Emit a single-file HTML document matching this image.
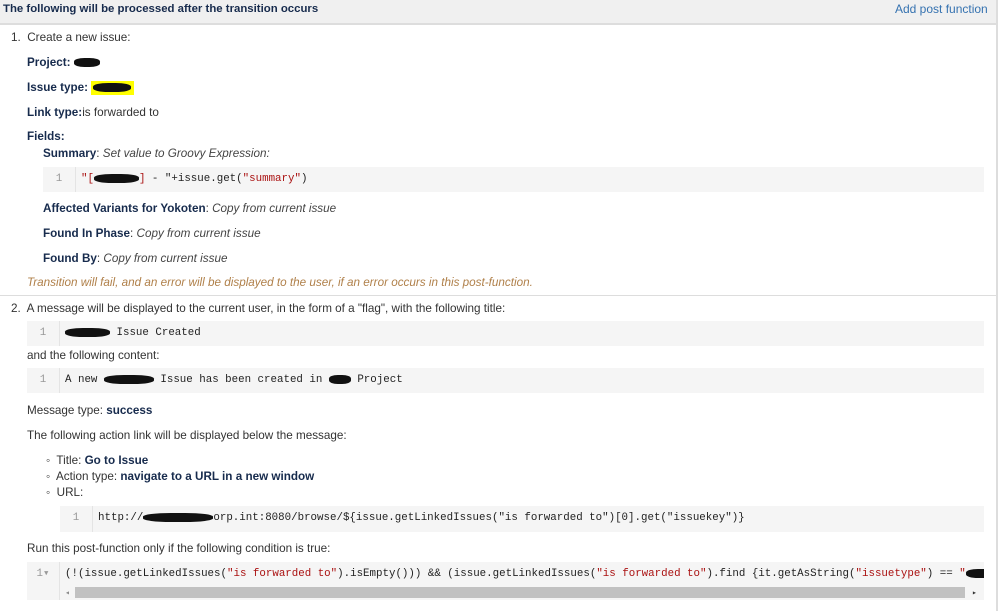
<!DOCTYPE html>
<html><head><meta charset="utf-8"><style>
body{margin:0;width:999px;height:611px;background:#fff;font-family:"Liberation Sans",sans-serif;font-size:11.7px;color:#333;position:relative;overflow:hidden}
.a{position:absolute;white-space:nowrap;line-height:14px}
b{color:#172b4d}
.hdr{position:absolute;left:0;top:0;width:996px;height:23px;background:#f0f0f0;border-bottom:2px solid #ddd}
.code{position:absolute;background:#f5f5f5;height:25px;font-family:"Liberation Mono",monospace;font-size:10.8px;color:#222;white-space:nowrap;overflow:hidden}
.code .n{position:absolute;left:0;top:0;width:32px;height:100%;border-right:1px solid #e4e4e4;color:#999;text-align:center;line-height:25px}
.code .t{position:absolute;left:38px;top:0;line-height:25px}
.s{color:#a11}
.scr{display:inline-block;background:#111;border-radius:40%;height:9px;vertical-align:middle}
i{color:#444}
</style></head><body>
<div class="hdr"></div>
<div style="position:absolute;left:996px;top:0;width:2px;height:611px;background:#ddd"></div>
<div class="a" style="left:3px;top:2px;font-weight:bold;font-size:11.4px;color:#172b4d">The following will be processed after the transition occurs</div>
<div class="a" style="left:895px;top:2px;color:#3572b0;font-size:12px">Add post function</div>

<div class="a" style="left:11px;top:31px">1.&nbsp; Create a new issue:</div>
<div class="a" style="left:27px;top:56px"><b>Project:</b> <span class="scr" style="width:26px"></span></div>
<div class="a" style="left:27px;top:81px"><b>Issue type:</b> <span style="background:#ff0;display:inline-block;width:43px;height:14px;vertical-align:middle"><span class="scr" style="width:38px;margin-left:2px"></span></span></div>
<div class="a" style="left:27px;top:106px"><b>Link type:</b>is forwarded to</div>
<div class="a" style="left:27px;top:130px"><b>Fields:</b></div>
<div class="a" style="left:43px;top:147px"><b>Summary</b>: <i>Set value to Groovy Expression:</i></div>
<div class="code" style="left:43px;top:167px;width:941px"><div class="n">1</div><div class="t"><span class="s">"[<span class="scr" style="width:45px"></span>]</span> - "+issue.get(<span class="s">"summary"</span>)</div></div>
<div class="a" style="left:43px;top:202px"><b>Affected Variants for Yokoten</b>: <i>Copy from current issue</i></div>
<div class="a" style="left:43px;top:227px"><b>Found In Phase</b>: <i>Copy from current issue</i></div>
<div class="a" style="left:43px;top:252px"><b>Found By</b>: <i>Copy from current issue</i></div>
<div class="a" style="left:27px;top:276px;color:#b0804a;font-style:italic">Transition will fail, and an error will be displayed to the user, if an error occurs in this post-function.</div>
<div style="position:absolute;left:0;top:295px;width:996px;height:1px;background:#ddd"></div>

<div class="a" style="left:11px;top:302px">2.&nbsp; A message will be displayed to the current user, in the form of a "flag", with the following title:</div>
<div class="code" style="left:27px;top:321px;width:957px"><div class="n">1</div><div class="t"><span class="scr" style="width:45px"></span> Issue Created</div></div>
<div class="a" style="left:27px;top:349px">and the following content:</div>
<div class="code" style="left:27px;top:368px;width:957px"><div class="n">1</div><div class="t">A new <span class="scr" style="width:50px"></span> Issue has been created in <span class="scr" style="width:22px"></span> Project</div></div>
<div class="a" style="left:27px;top:404px">Message type: <b>success</b></div>
<div class="a" style="left:27px;top:429px">The following action link will be displayed below the message:</div>
<div class="a" style="left:46px;top:454px">◦&nbsp; Title: <b>Go to Issue</b></div>
<div class="a" style="left:46px;top:470px">◦&nbsp; Action type: <b>navigate to a URL in a new window</b></div>
<div class="a" style="left:46px;top:486px">◦&nbsp; URL:</div>
<div class="code" style="left:60px;top:506px;width:924px;height:26px"><div class="n">1</div><div class="t">http://<span class="scr" style="width:70px"></span>orp.int:8080/browse/${issue.getLinkedIssues("is forwarded to")[0].get("issuekey")}</div></div>
<div class="a" style="left:27px;top:542px">Run this post-function only if the following condition is true:</div>
<div class="code" style="left:27px;top:562px;width:957px;height:38px"><div class="n" style="height:100%;line-height:25px">1▾</div><div class="t">(!(issue.getLinkedIssues(<span class="s">"is forwarded to"</span>).isEmpty())) &amp;&amp; (issue.getLinkedIssues(<span class="s">"is forwarded to"</span>).find {it.getAsString(<span class="s">"issuetype"</span>) == <span class="s">"</span><span class="scr" style="width:30px"></span></div>
<div style="position:absolute;left:48px;top:25px;width:890px;height:11px;background:#c1c1c1"></div>
<div style="position:absolute;left:38px;top:26px;font-size:8px;color:#888">◂</div>
<div style="position:absolute;left:945px;top:26px;font-size:8px;color:#333">▸</div>
</div>
</body></html>
